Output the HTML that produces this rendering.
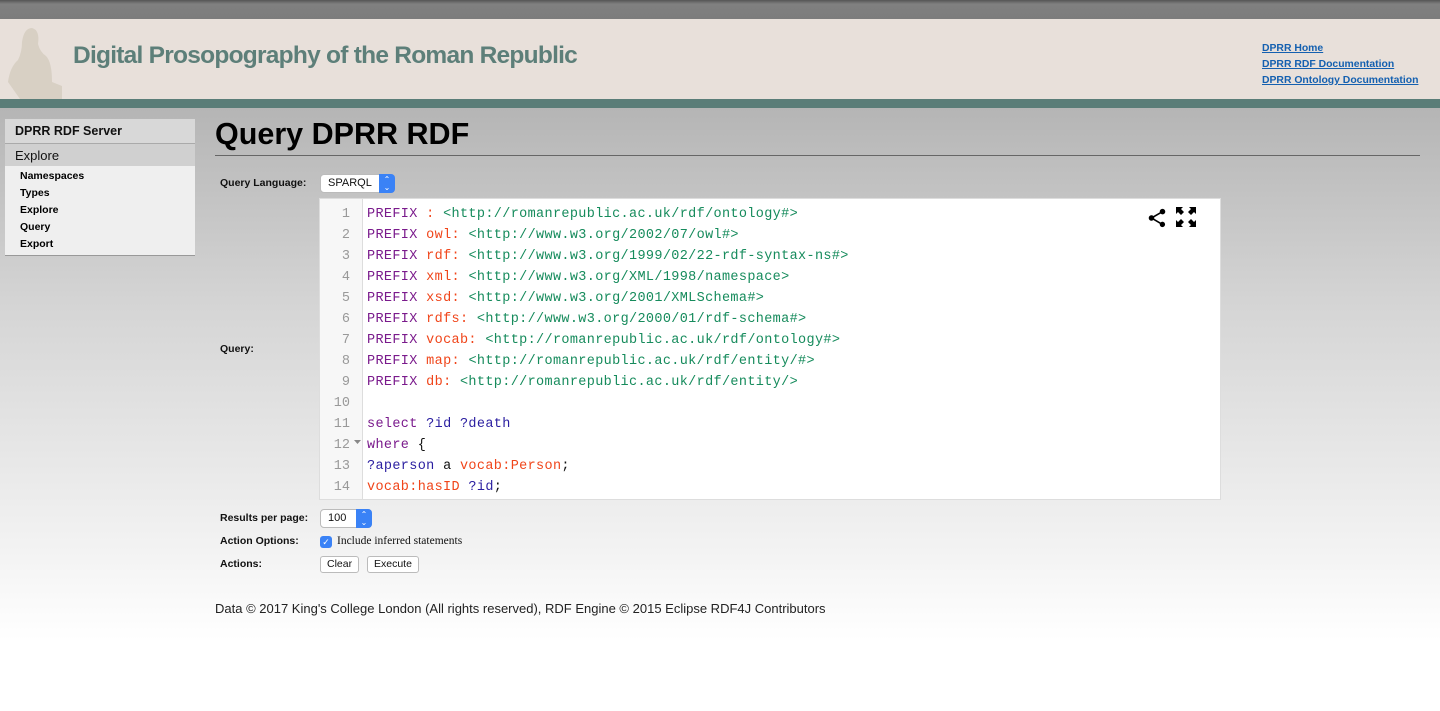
<!DOCTYPE html>
<html><head><meta charset="utf-8"><style>
*{margin:0;padding:0;box-sizing:border-box}
body{width:1440px;height:711px;overflow:hidden;font-family:"Liberation Sans",sans-serif;background:linear-gradient(#b5b5b5 108px,#d4d4d4 300px,#f4f4f4 560px,#fff 640px);position:relative}
.top{position:absolute;left:0;top:0;width:1440px;height:19px;background:linear-gradient(#555,#808080 4px,#7c7c7c)}
.hdr{position:absolute;left:0;top:19px;width:1440px;height:80px;background:#e8e0da}
.teal{position:absolute;left:0;top:99px;width:1440px;height:9px;background:#5a7d78}
.title{position:absolute;left:73px;top:42px;font-size:24.5px;color:#5d7f79;font-weight:bold;letter-spacing:-0.75px}
.links{position:absolute;left:1262px;top:41px;font-size:10.4px;font-weight:bold;line-height:16px}
.links a{display:block;color:#1460b0;text-decoration:underline}
.side{position:absolute;left:5px;top:119px;width:190px}
.side .h1{height:25px;background:#d8d8d8;font-size:12.5px;font-weight:bold;padding:5px 10px;color:#111;border-bottom:1px solid #aaa}
.side .h2{height:22px;font-size:13px;padding:4px 10px;color:#111;background:#d0d0d0}
.side ul{list-style:none;background:#efefef;padding:2px 0 2px 15px;font-size:10.5px;font-weight:bold;line-height:17px;border-bottom:1px solid #999}
h1{position:absolute;left:215px;top:117px;font-size:30.5px;font-weight:bold;color:#000}
.rule{position:absolute;left:215px;top:155px;width:1205px;height:1px;background:#666}
.lbl{position:absolute;left:220px;font-size:10.5px;font-weight:bold;color:#111}
.sel{position:absolute;left:320px;height:19px;border:1px solid #bbb;border-radius:4px;background:#fff;font-size:11px;padding:2px 7px;color:#111}
.sel i{position:absolute;right:-1px;top:-1px;width:16px;height:19px;background:#3a82f6;border-radius:0 4px 4px 0;color:#fff;font-style:normal;font-size:8px;text-align:center;line-height:8px;padding-top:2px}
.code{position:absolute;left:319px;top:198px;width:902px;height:302px;background:#fff;border:1px solid #ddd;overflow:hidden}
.gut{position:absolute;left:0;top:0;width:43px;height:100%;background:#f7f7f7;border-right:1px solid #ddd}
.ln{position:absolute;top:5px;left:0;font-family:"Liberation Mono","Courier New","DejaVu Sans Mono",monospace;font-size:13.5px;line-height:21px}
.ln div{white-space:pre}
.nums{width:30px;text-align:right;color:#999}
.src{left:47px;letter-spacing:0.35px}
.k{color:#7a1a8c}.p{color:#f0451a}.u{color:#168b5c}.v{color:#2a1ea0}.t{color:#111}
.btn{position:absolute;top:556px;height:17px;border:1px solid #bbb;border-radius:3px;background:#fff;font-size:10.5px;padding:1px 6px;color:#111}
.foot{position:absolute;left:215px;top:601px;font-size:13px;color:#222}
</style></head><body>
<div class="top"></div>
<div class="hdr"></div>
<svg style="position:absolute;left:0;top:22px" width="70" height="77"><path d="M20 77 L8 60 Q10 45 18 38 Q22 30 22 20 Q24 6 32 6 Q40 8 38 22 Q40 30 46 34 Q52 40 52 60 L62 64 L62 77Z" fill="#d8d0c4"/></svg>
<div class="title">Digital Prosopography of the Roman Republic</div>
<div class="links"><a>DPRR Home</a><a>DPRR RDF Documentation</a><a>DPRR Ontology Documentation</a></div>
<div class="teal"></div>
<div class="side"><div class="h1">DPRR RDF Server</div><div class="h2">Explore</div>
<ul><li>Namespaces</li><li>Types</li><li>Explore</li><li>Query</li><li>Export</li></ul></div>
<h1>Query DPRR RDF</h1><div class="rule"></div>
<div class="lbl" style="top:177px">Query Language:</div>
<div class="sel" style="top:174px;width:75px">SPARQL<i>⌃<br>⌄</i></div>
<div class="lbl" style="top:343px">Query:</div>
<div class="code"><div class="gut"></div>
<div class="ln nums"><div>1</div><div>2</div><div>3</div><div>4</div><div>5</div><div>6</div><div>7</div><div>8</div><div>9</div><div>10</div><div>11</div><div>12</div><div>13</div><div>14</div></div>
<div class="ln src">
<div><span class="k">PREFIX</span> <span class="p">:</span> <span class="u">&lt;http://romanrepublic.ac.uk/rdf/ontology#&gt;</span></div>
<div><span class="k">PREFIX</span> <span class="p">owl:</span> <span class="u">&lt;http://www.w3.org/2002/07/owl#&gt;</span></div>
<div><span class="k">PREFIX</span> <span class="p">rdf:</span> <span class="u">&lt;http://www.w3.org/1999/02/22-rdf-syntax-ns#&gt;</span></div>
<div><span class="k">PREFIX</span> <span class="p">xml:</span> <span class="u">&lt;http://www.w3.org/XML/1998/namespace&gt;</span></div>
<div><span class="k">PREFIX</span> <span class="p">xsd:</span> <span class="u">&lt;http://www.w3.org/2001/XMLSchema#&gt;</span></div>
<div><span class="k">PREFIX</span> <span class="p">rdfs:</span> <span class="u">&lt;http://www.w3.org/2000/01/rdf-schema#&gt;</span></div>
<div><span class="k">PREFIX</span> <span class="p">vocab:</span> <span class="u">&lt;http://romanrepublic.ac.uk/rdf/ontology#&gt;</span></div>
<div><span class="k">PREFIX</span> <span class="p">map:</span> <span class="u">&lt;http://romanrepublic.ac.uk/rdf/entity/#&gt;</span></div>
<div><span class="k">PREFIX</span> <span class="p">db:</span> <span class="u">&lt;http://romanrepublic.ac.uk/rdf/entity/&gt;</span></div>
<div> </div>
<div><span class="k">select</span> <span class="v">?id ?death</span></div>
<div><span class="k">where</span> <span class="t">{</span></div>
<div><span class="v">?aperson</span> <span class="t">a</span> <span class="p">vocab:Person</span><span class="t">;</span></div>
<div><span class="p">vocab:hasID</span> <span class="v">?id</span><span class="t">;</span></div>
</div>
<svg style="position:absolute;left:34px;top:240px" width="8" height="6"><path d="M0 1H7L3.5 5Z" fill="#888"/></svg>
<svg style="position:absolute;left:826px;top:8px" width="22" height="22" viewBox="0 0 24 24"><path d="M18 16.1c-.8 0-1.5.3-2 .8L8.9 12.7c.1-.2.1-.5.1-.7s0-.5-.1-.7L16 7.2c.5.5 1.200.8 2 .8 1.7 0 3-1.3 3-3s-1.3-3-3-3-3 1.3-3 3c0 .2 0 .5.1.7L8 9.8C7.5 9.3 6.8 9 6 9c-1.7 0-3 1.3-3 3s1.3 3 3 3c.8 0 1.5-.3 2-.8l7.1 4.2c-.1.2-.1.4-.1.6 0 1.6 1.3 2.9 2.9 2.9s2.9-1.3 2.9-2.9-1.3-2.9-2.8-2.9z"/></svg>
<svg style="position:absolute;left:856px;top:8px" width="20" height="20" viewBox="0 0 20 20"><path d="M0 0H7L5 2 8 5 5 8 2 5 0 7ZM20 0V7L18 5 15 8 12 5 15 2 13 0ZM0 20V13L2 15 5 12 8 15 5 18 7 20ZM20 20H13L15 18 12 15 15 12 18 15 20 13Z"/></svg>
</div>
<div class="lbl" style="top:512px">Results per page:</div>
<div class="sel" style="top:509px;width:52px">100<i>⌃<br>⌄</i></div>
<div class="lbl" style="top:535px">Action Options:</div>
<div style="position:absolute;left:320px;top:536px;width:12px;height:12px;background:#3a82f6;border-radius:3px;color:#fff;font-size:9px;text-align:center;line-height:12px">✓</div>
<div style="position:absolute;left:337px;top:535px;font-family:'Liberation Serif',serif;font-size:11.5px;color:#111">Include inferred statements</div>
<div class="lbl" style="top:558px">Actions:</div>
<div class="btn" style="left:320px">Clear</div>
<div class="btn" style="left:367px">Execute</div>
<div class="foot">Data © 2017 King's College London (All rights reserved), RDF Engine © 2015 Eclipse RDF4J Contributors</div>
</body></html>
